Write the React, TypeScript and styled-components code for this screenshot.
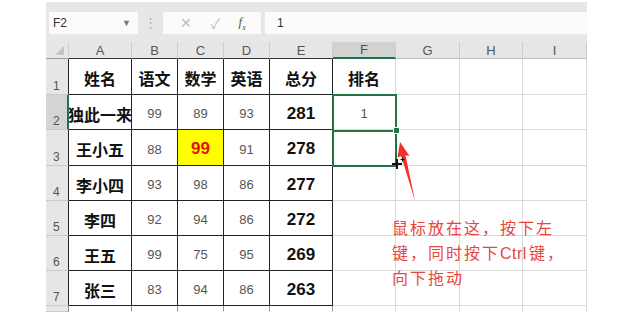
import { Fragment } from "react"
import styled, { createGlobalStyle } from "styled-components"

const GlobalStyle = createGlobalStyle`
  body {
    margin: 0;
    background: #fff;
    font-family: "Liberation Sans", "Noto Sans CJK SC", sans-serif;
  }
`

const GREEN = "#217346"
const GRID = "#d9d9d9"

const Frame = styled.div`
  position: relative;
  width: 541px;
  margin: 2px 0 0 46px;
`

const Toolbar = styled.div`
  display: flex;
  align-items: flex-start;
  height: 40px;
  padding: 10px 0 0 3px;
  box-sizing: border-box;
  background: #e7e7e7;
`

const NameBox = styled.div`
  display: flex;
  align-items: center;
  justify-content: space-between;
  width: 89px;
  height: 22px;
  box-sizing: border-box;
  padding: 0 7px 0 4px;
  background: #fbfbfb;
  font-size: 12px;
  color: #333;

  .caret {
    font-size: 9px;
    color: #777;
  }
`

const Dots = styled.div`
  width: 25px;
  text-align: center;
  line-height: 22px;
  font-size: 13px;
  color: #b5b5b5;
`

const FxBox = styled.div`
  display: flex;
  align-items: center;
  justify-content: space-around;
  width: 98px;
  height: 22px;
  padding: 0 6px 0 8px;
  box-sizing: border-box;
  background: #fbfbfb;
  color: #bdbdbd;
  font-size: 14px;

  .fx {
    font-family: "Liberation Serif", serif;
    font-style: italic;
    font-size: 13px;
    color: #555;
  }
  .fx sub {
    font-size: 8px;
  }
`

const Formula = styled.div`
  flex: 1;
  height: 22px;
  margin-left: 4px;
  padding-left: 12px;
  line-height: 22px;
  background: #fbfbfb;
  font-size: 12px;
  color: #333;
`

const Sheet = styled.div`
  display: grid;
  grid-template-columns: 23px 63px 46px 46px 46px 63px 63px 64px 63px 64px;
  grid-template-rows: 17px 36px 35px 36px 35px 35px 35px 35px 6px;
  background: #fff;
`

const Corner = styled.div`
  position: relative;
  background: #e6e6e6;
  border-right: 1px solid #cfcfcf;
  border-bottom: 1px solid #9a9a9a;

  &::after {
    content: "";
    position: absolute;
    right: 4px;
    bottom: 3px;
    border-left: 9px solid transparent;
    border-bottom: 9px solid #c4c4c4;
  }
`

const ColHead = styled.div<{ $active?: boolean; $edge: string }>`
  display: flex;
  align-items: center;
  justify-content: center;
  background: ${({ $active }) => ($active ? "#d2d2d2" : "#e6e6e6")};
  border-right: 1px solid #cdcdcd;
  border-bottom: ${({ $active, $edge }) => ($active ? `2px solid ${GREEN}` : `1px solid ${$edge}`)};
  box-sizing: border-box;
  font-size: 13px;
  color: ${({ $active }) => ($active ? "#3a5e46" : "#555")};
`

const RowHead = styled.div<{ $active?: boolean; $edge: string }>`
  display: flex;
  align-items: flex-end;
  padding: 0 0 1px 7px;
  box-sizing: border-box;
  background: ${({ $active }) => ($active ? "#d4d4d4" : "#e6e6e6")};
  border-right: ${({ $active, $edge }) => ($active ? `2px solid ${GREEN}` : `1px solid ${$edge}`)};
  border-bottom: 1px solid #cacaca;
  font-size: 12px;
  color: #555;
`

type Kind = "head" | "name" | "score" | "total" | "hit" | "rank" | "empty"

const Cell = styled.div<{ $kind: Kind; $right: string; $bottom: string }>`
  display: flex;
  align-items: center;
  justify-content: center;
  overflow: hidden;
  white-space: nowrap;
  box-sizing: border-box;
  padding-top: 3px;
  border-right: 1px solid ${({ $right }) => $right};
  border-bottom: 1px solid ${({ $bottom }) => $bottom};
  background: ${({ $kind }) => ($kind === "hit" ? "#ffff00" : "#fff")};
  font-family: ${({ $kind }) =>
    $kind === "head" || $kind === "name"
      ? `"Noto Sans CJK SC", sans-serif`
      : `"Liberation Sans", sans-serif`};
  font-size: ${({ $kind }) =>
    $kind === "score" || $kind === "rank" ? "13px" : $kind === "total" || $kind === "hit" ? "17px" : "16px"};
  font-weight: ${({ $kind }) => ($kind === "score" || $kind === "rank" ? 400 : 700)};
  color: ${({ $kind }) =>
    $kind === "hit" ? "#e8120c" : $kind === "score" || $kind === "rank" ? "#555" : "#111"};
`

const Selection = styled.div`
  position: absolute;
  left: 286px;
  top: 92px;
  width: 65px;
  height: 73px;
  box-sizing: border-box;
  border: 2px solid ${GREEN};
  pointer-events: none;

  .split {
    height: 34px;
    border-bottom: 2px solid ${GREEN};
  }
`

const Handle = styled.span`
  position: absolute;
  right: -4px;
  top: 32px;
  width: 5px;
  height: 5px;
  background: ${GREEN};
  border: 1px solid #fff;
  margin: -1px;
`

const Cursor = styled.svg`
  position: absolute;
  left: 345px;
  top: 155px;
`

const Arrow = styled.svg`
  position: absolute;
  left: 346px;
  top: 136px;
`

const Note = styled.div`
  position: absolute;
  left: 346px;
  top: 214px;
  font-family: "Liberation Sans", "Noto Sans CJK SC", sans-serif;
  font-size: 16px;
  line-height: 25px;
  letter-spacing: 2px;
  color: #e8453c;
  white-space: nowrap;

  .latin {
    letter-spacing: 0.5px;
    margin-right: 2px;
  }
`

const COLS = ["A", "B", "C", "D", "E", "F", "G", "H", "I"]

const rows: (string | number)[][] = [
  ["姓名", "语文", "数学", "英语", "总分", "排名"],
  ["独此一来", 99, 89, 93, 281, 1],
  ["王小五", 88, 99, 91, 278],
  ["李小四", 93, 98, 86, 277],
  ["李四", 92, 94, 86, 272],
  ["王五", 99, 75, 95, 269],
  ["张三", 83, 94, 86, 263],
]

const kindOf = (r: number, c: number, v: string | number | undefined): Kind => {
  if (v === undefined) return "empty"
  if (r === 0) return "head"
  if (c === 0) return "name"
  if (r === 2 && c === 2) return "hit"
  if (c === 4) return "total"
  if (c === 5) return "rank"
  return "score"
}

export default function App() {
  return (
    <>
      <GlobalStyle />
      <Frame>
        <Toolbar>
          <NameBox>
            F2<span className="caret">▼</span>
          </NameBox>
          <Dots>⋮</Dots>
          <FxBox>
            <span>✕</span>
            <span>✓</span>
            <span className="fx">
              f<sub>x</sub>
            </span>
          </FxBox>
          <Formula>1</Formula>
        </Toolbar>

        <Sheet>
          <Corner />
          {COLS.map((col, c) => (
            <ColHead key={col} $active={col === "F"} $edge={c <= 4 ? "#333" : "#bdbdbd"}>
              {col}
            </ColHead>
          ))}

          {rows.map((row, r) => (
            <Fragment key={r}>
              <RowHead $active={r === 1} $edge="#222">
                {r + 1}
              </RowHead>
              {COLS.map((col, c) => {
                const v = row[c]
                const inTable = c <= 4
                return (
                  <Cell
                    key={col}
                    $kind={kindOf(r, c, v)}
                    $right={inTable ? "#222" : GRID}
                    $bottom={inTable ? "#222" : GRID}
                  >
                    {v}
                  </Cell>
                )
              })}
            </Fragment>
          ))}

          <RowHead $edge="#888" />
          {COLS.map((col, c) => (
            <Cell key={`tail${col}`} $kind="empty" $right={c <= 4 ? "#999" : GRID} $bottom="transparent" />
          ))}
        </Sheet>

        <Selection>
          <div className="split" />
          <Handle />
        </Selection>

        <Arrow width="26" height="66" viewBox="0 0 26 66">
          <polygon points="8,4 17.5,18 13.5,17.2 23,63 9.3,18.3 5.5,19.2" fill="#f0302a" />
        </Arrow>

        <Cursor width="14" height="14" viewBox="0 0 14 14">
          <path d="M6 2v10M1 7h10" stroke="#111" strokeWidth="2" />
          <path d="M11.5 0.5v4M9.5 2.5h4" stroke="#111" strokeWidth="1" />
        </Cursor>

        <Note>
          鼠标放在这，按下左
          <br />
          键，同时按下<span className="latin">Ctrl</span>键，
          <br />
          向下拖动
        </Note>
      </Frame>
    </>
  )
}
